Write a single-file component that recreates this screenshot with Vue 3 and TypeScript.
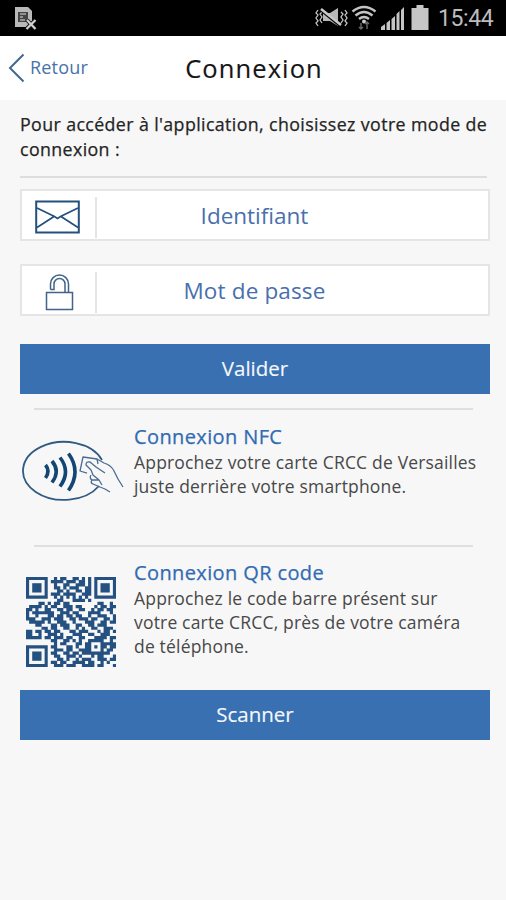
<script setup lang="ts">
const qrRows: string[] = [
  '11111110010110011010100111111',
  '10000010111101110110100100000',
  '10111010010011001110100101110',
  '10111010011010111001100101110',
  '10111010001101001101100101110',
  '10000010111011110011100100000',
  '11111110010101010101010111111',
  '00000000001100011110100000000',
  '00001101011011000000000110010',
  '01111010110011101100001011011',
  '11010011001101100110010110110',
  '10111111100111011000111100010',
  '10010001101101101100100111001',
  '11100111011100110111011001101',
  '01111101001110010001110011011',
  '00011000110111001100110111000',
  '00000110110011001010011001110',
  '11011011011000110111000101101',
  '11001001110100011100110011100',
  '11111011011101100110001111011',
  '00000000110011010100111110010',
  '00000000010110001101100011111',
  '11111110110001101001101011011',
  '10000010011101100111100010110',
  '10111010110011011011111111100',
  '10111010011001110100010110001',
  '10111010001101001011100111011',
  '10000010110110011110110010100',
  '11111110011101110011110110001'
]

/* The 7x7 locator squares are drawn separately from the data modules. */
const inFinder = (x: number, y: number): boolean => (y < 8 && (x < 8 || x > 20)) || (y > 20 && x < 8)

const qrPath: string = qrRows
  .flatMap((row, y) => [...row].map((cell, x) => (cell === '1' && !inFinder(x, y) ? `M${x} ${y}h1.03v1.03h-1.03z` : '')))
  .join('')

const finders: [number, number][] = [[0, 0], [22, 0], [0, 22]]
</script>

<template>
  <div class="screen">
    <header class="status">
      <svg class="doc" width="24" height="24" viewBox="0 0 24 24">
        <path d="M1 1h13l4 4v16H1z" fill="#b9b9b9" />
        <path d="M4 6h10v10H4z" fill="#444" />
        <path d="M6 8h6M6 11h3M6 14h5" stroke="#aaa" stroke-width="1.3" />
        <path d="M13 14l8.500 9M21.500 14l-9 9" stroke="#111" stroke-width="4" />
        <path d="M13 14l8.500 9M21.500 14l-9 9" stroke="#d0d0d0" stroke-width="2.200" />
      </svg>
      <svg class="signals" width="118" height="36" viewBox="0 -1 118 36">
        <g fill="none" stroke="#c4c4c4">
          <path d="M4 9l-2 3 2 2-2 3 2 3-2 2 2 3M8 11l-2 2 2 3-2 3 2 3M27 11l2 2-2 3 2 3-2 3M31 9l2 3-2 2 2 3-2 3 2 2-2 3" stroke-width="1.300" />
          <path d="M38.500 10.500q11.500-9 23 0M41.500 14.500q8.500-7 17 0M45 18q5-4 10 0" stroke-width="2.500" />
        </g>
        <path d="M9 12h7l8-5v18l-8-5H9z" fill="#b8b8b8" />
        <path d="M7 9l21 17" stroke="#000" stroke-width="3" />
        <path d="M7 8l20 16" stroke="#c8c8c8" stroke-width="2.600" />
        <circle cx="50" cy="20.500" r="2" fill="#ccc" />
        <path d="M47 22v6m-2-2l2 2 2-2M53 28v-7m-2 2l2-2 2 2" fill="none" stroke="#666" stroke-width="1.500" />
        <path d="M67 29v-3l4-3v6zM72.500 29v-7l3.500-3v10zM77.500 29v-11l3.500-3v14zM82.500 29V13l3-3v19zM87 29V9l3-3v23z" fill="#c4c4c4" />
        <path d="M97.500 7h5V4h7v3h5v22h-17z" fill="#c7c7c7" />
      </svg>
      <span class="clock">15:44</span>
    </header>

    <nav class="navbar">
      <a class="back">
        <svg width="17" height="30" viewBox="0 0 17 30"><path d="M15.500 1.500L2 15l13.500 13.500" fill="none" stroke="#416990" stroke-width="2" /></svg>
        <span class="back-label">Retour</span>
      </a>
      <h1 class="title">Connexion</h1>
    </nav>

    <main class="content">
      <p class="intro">Pour accéder à l'application, choisissez votre mode de<br />connexion :</p>
      <hr class="rule wide" />

      <div class="field">
        <div class="field-icon">
          <svg width="45" height="34" viewBox="0 0 45 34" fill="none" stroke="#24507d">
            <path d="M1.200 1.500h42.600v31H1.200z" stroke-width="2" />
            <path d="M2 8l17.500 8.500 3 2 3-2L43 8M2 27.500l17-11M43 27.500L26 16.500" stroke-width="1.700" />
          </svg>
        </div>
        <span class="placeholder">Identifiant</span>
      </div>

      <div class="field second">
        <div class="field-icon">
          <svg class="lock" width="29" height="37" viewBox="0 0 29 37" fill="none" stroke="#416488" stroke-width="1.500">
            <path d="M1.500 18.500h26v17h-26zM5.500 15.500V10a9 9 0 0 1 18 0v8.500M5.500 15.500h3.500V10a5.500 5.500 0 0 1 11 0v8.500" />
          </svg>
        </div>
        <span class="placeholder pass">Mot de passe</span>
      </div>

      <button class="action submit"><span>Valider</span></button>
      <hr class="rule" />

      <section class="method nfc">
        <svg class="nfc-icon" width="103" height="64" viewBox="0 0 103 64" fill="none" stroke="#315b83">
          <path d="M81 20A41 29 0 1 0 78 46" stroke-width="1.800" />
          <g stroke="#134675" stroke-width="3.600">
            <path d="M24.500 25q5 6 0 13M31 21q8.500 10.500 0 21.500M39 17.500q11 14 0 29M47.500 13.500q13 18 0 37" />
          </g>
          <g stroke="#4a6c92" stroke-width="1.300" stroke-linejoin="round">
            <path d="M66 33l-7-2 3-14 14 2 7 4q7 2 10 8l4 8 5 8" />
            <path d="M76 19l1 5M84 33l-9-6-6-5q-4-1-4 3l5 5 2 5 6 5 3 5M70 35q-2 3 1 5h7M71 40q-2 3 1 4l7 3 5 2 5 3" />
          </g>
        </svg>
        <div class="copy">
          <h2>Connexion NFC</h2>
          <p>Approchez votre carte CRCC de Versailles<br />juste derrière votre smartphone.</p>
        </div>
      </section>

      <hr class="rule" />

      <section class="method qr">
        <svg class="qr-icon" width="90" height="90" viewBox="0 0 29 29">
          <path :d="qrPath" fill="#245181" />
          <g v-for="([x, y], i) in finders" :key="i" fill="#245181">
            <path :d="`M${x + 0.5} ${y + 0.5}h6v6h-6z`" fill="none" stroke="#245181" />
            <rect :x="x + 2" :y="y + 2" width="3" height="3" />
          </g>
        </svg>
        <div class="copy">
          <h2>Connexion QR code</h2>
          <p>Approchez le code barre présent sur<br />votre carte CRCC, près de votre caméra<br />de téléphone.</p>
        </div>
      </section>

      <button class="action scan"><span>Scanner</span></button>
    </main>
  </div>
</template>

<style>
body { margin: 0; background: #f7f7f7; }
</style>

<style scoped>
* { box-sizing: border-box; }
.screen { width: 506px; height: 900px; background: #f7f7f7; font-family: "Open Sans", "Noto Sans", sans-serif; color: #484848; overflow: hidden; }
.status { height: 36px; background: #000; display: flex; align-items: center; padding: 0 14px; }
.doc { margin-right: auto; }
.signals { margin-right: 6px; }
.clock { font: 23px/36px Roboto, sans-serif; letter-spacing: -0.4px; color: #bdbdbd; width: 54px; padding-top: 1px; white-space: nowrap; }
.navbar { height: 64px; background: #fff; display: grid; grid-template-columns: 1fr auto 1fr; align-items: center; }
.back { display: flex; align-items: center; gap: 5px; padding-left: 8px; color: #4772aa; }
.back-label { font-size: 18px; line-height: 28px; letter-spacing: .2px; margin-top: -2px; }
.title { margin: 0; padding-left: 2px; font-size: 25.500px; line-height: 36px; font-weight: 400; letter-spacing: 1.1px; color: #151515; -webkit-text-stroke: .15px #151515; }
.content { padding: 12px 16px 0 20px; }
.intro { margin: 0; font-size: 17.800px; line-height: 25px; letter-spacing: .39px; color: #242424; -webkit-text-stroke: .25px #242424; white-space: nowrap; }
.rule { border: 0; height: 2px; margin: 0 17px 0 14px; background: #dedfdf; }
.rule.wide { margin: 14px 3px 11px 0; background: #dddfdf; }
.field { display: flex; align-items: center; height: 52px; background: #fff; border: 2px solid #e5e5e5; }
.field.second { margin-top: 23px; }
.field-icon { width: 75px; height: 41px; margin-top: 4px; border-right: 2px solid #e4e4e4; display: flex; align-items: center; justify-content: center; padding-right: 3px; }
.lock { margin-left: 4px; }
.placeholder { flex: 1; font-size: 22.500px; line-height: 30px; color: #4870ad; padding: 2px 76px 0 0; text-align: center; white-space: nowrap; }
.pass { letter-spacing: .15px; }
.action { display: flex; width: 100%; height: 50px; border: 0; border-radius: 0; background: #3870b2; color: #f4f7fb; align-items: center; justify-content: center; padding: 0 0 2px; font: 400 20.500px/30px "Open Sans", sans-serif; -webkit-text-stroke: .15px #f4f7fb; }
.submit { margin: 28px 0 14px; }
.method { display: grid; grid-template-columns: 114px 1fr; align-items: start; }
.nfc { height: 135px; }
.nfc-icon { margin: 30px 0 0 1px; }
.qr { height: 143px; }
.qr-icon { margin: 30px 0 0 6px; }
.copy { padding-top: 13px; white-space: nowrap; }
.qr .copy { padding-top: 12px; }
.copy h2 { margin: 0; font-size: 20px; line-height: 27px; font-weight: 400; color: #316bb3; letter-spacing: .38px; -webkit-text-stroke: .25px #316bb3; }
.copy p { margin: 0; font-size: 17.500px; line-height: 24px; letter-spacing: .18px; }
</style>
